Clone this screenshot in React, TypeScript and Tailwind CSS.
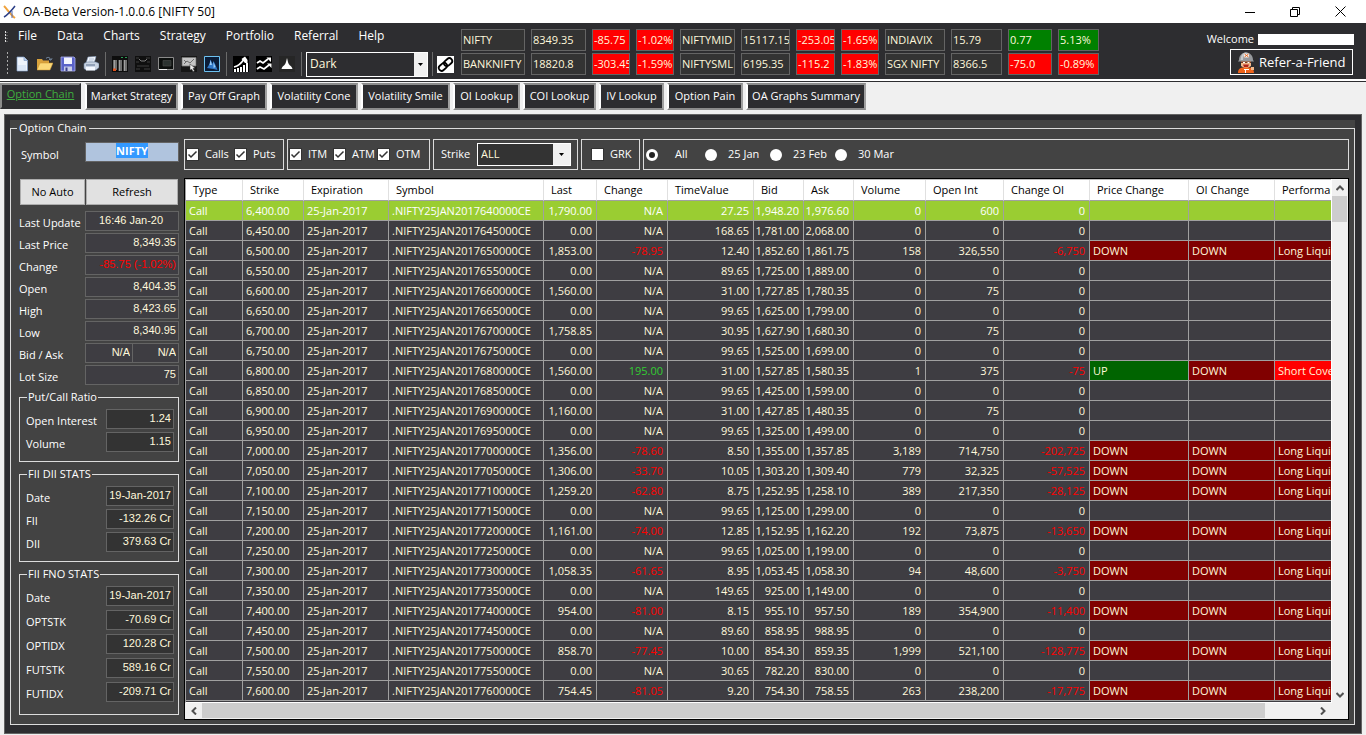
import { useEffect, useRef, type ReactNode } from 'react';

const menus = ['File', 'Data', 'Charts', 'Strategy', 'Portfolio', 'Referral', 'Help'];

const tabs = [
  { label: 'Market Strategy', width: 'w-[93px]' },
  { label: 'Pay Off Graph', width: 'w-[86px]' },
  { label: 'Volatility Cone', width: 'w-[88px]' },
  { label: 'Volatility Smile', width: 'w-[89px]' },
  { label: 'OI Lookup', width: 'w-[67px]' },
  { label: 'COI Lookup', width: 'w-[73px]' },
  { label: 'IV Lookup', width: 'w-[65px]' },
  { label: 'Option Pain', width: 'w-[76px]' },
  { label: 'OA Graphs Summary', width: 'w-[120px]' },
];

const quotes = [
  ['NIFTY', '8349.35', '-85.75', '-1.02%', 'NIFTYMID', '15117.15', '-253.05', '-1.65%', 'INDIAVIX', '15.79', '0.77', '5.13%'],
  ['BANKNIFTY', '18820.8', '-303.45', '-1.59%', 'NIFTYSML', '6195.35', '-115.2', '-1.83%', 'SGX NIFTY', '8366.5', '-75.0', '-0.89%'],
];

const columns = [
  { name: 'Type', width: 'w-[57px]' },
  { name: 'Strike', width: 'w-[61px]' },
  { name: 'Expiration', width: 'w-[85px]' },
  { name: 'Symbol', width: 'w-[155px]' },
  { name: 'Last', width: 'w-[53px]' },
  { name: 'Change', width: 'w-[71px]' },
  { name: 'TimeValue', width: 'w-[86px]' },
  { name: 'Bid', width: 'w-[50px]' },
  { name: 'Ask', width: 'w-[50px]' },
  { name: 'Volume', width: 'w-[72px]' },
  { name: 'Open Int', width: 'w-[78px]' },
  { name: 'Change OI', width: 'w-[86px]' },
  { name: 'Price Change', width: 'w-[99px]' },
  { name: 'OI Change', width: 'w-[86px]' },
  { name: 'Performance', width: 'w-[120px]' },
];

// strike, last, change, time value, bid, ask, volume, open interest, change in OI
const chain: string[][] = [
  ['6,400', '1,790.00', 'N/A', '27.25', '1,948.20', '1,976.60', '0', '600', '0'],
  ['6,450', '0.00', 'N/A', '168.65', '1,781.00', '2,068.00', '0', '0', '0'],
  ['6,500', '1,853.00', '-78.95', '12.40', '1,852.60', '1,861.75', '158', '326,550', '-6,750'],
  ['6,550', '0.00', 'N/A', '89.65', '1,725.00', '1,889.00', '0', '0', '0'],
  ['6,600', '1,560.00', 'N/A', '31.00', '1,727.85', '1,780.35', '0', '75', '0'],
  ['6,650', '0.00', 'N/A', '99.65', '1,625.00', '1,799.00', '0', '0', '0'],
  ['6,700', '1,758.85', 'N/A', '30.95', '1,627.90', '1,680.30', '0', '75', '0'],
  ['6,750', '0.00', 'N/A', '99.65', '1,525.00', '1,699.00', '0', '0', '0'],
  ['6,800', '1,560.00', '195.00', '31.00', '1,527.85', '1,580.35', '1', '375', '-75'],
  ['6,850', '0.00', 'N/A', '99.65', '1,425.00', '1,599.00', '0', '0', '0'],
  ['6,900', '1,160.00', 'N/A', '31.00', '1,427.85', '1,480.35', '0', '75', '0'],
  ['6,950', '0.00', 'N/A', '99.65', '1,325.00', '1,499.00', '0', '0', '0'],
  ['7,000', '1,356.00', '-78.60', '8.50', '1,355.00', '1,357.85', '3,189', '714,750', '-202,725'],
  ['7,050', '1,306.00', '-33.70', '10.05', '1,303.20', '1,309.40', '779', '32,325', '-57,525'],
  ['7,100', '1,259.20', '-62.80', '8.75', '1,252.95', '1,258.10', '389', '217,350', '-28,125'],
  ['7,150', '0.00', 'N/A', '99.65', '1,125.00', '1,299.00', '0', '0', '0'],
  ['7,200', '1,161.00', '-74.00', '12.85', '1,152.95', '1,162.20', '192', '73,875', '-13,650'],
  ['7,250', '0.00', 'N/A', '99.65', '1,025.00', '1,199.00', '0', '0', '0'],
  ['7,300', '1,058.35', '-61.65', '8.95', '1,053.45', '1,058.30', '94', '48,600', '-3,750'],
  ['7,350', '0.00', 'N/A', '149.65', '925.00', '1,149.00', '0', '0', '0'],
  ['7,400', '954.00', '-81.00', '8.15', '955.10', '957.50', '189', '354,900', '-11,400'],
  ['7,450', '0.00', 'N/A', '89.60', '858.95', '988.95', '0', '0', '0'],
  ['7,500', '858.70', '-77.45', '10.00', '854.30', '859.35', '1,999', '521,100', '-128,775'],
  ['7,550', '0.00', 'N/A', '30.65', '782.20', '830.00', '0', '0', '0'],
  ['7,600', '754.45', '-81.05', '9.20', '754.30', '758.55', '263', '238,200', '-17,775'],
];

function Icon({ children, size = 16 }: { children: ReactNode; size?: number }) {
  return (
    <svg width={size} height={size} viewBox="0 0 16 16" aria-hidden="true">
      {children}
    </svg>
  );
}

const fileTools: [string, ReactNode][] = [
  ['New', <>
    <path d="M3 1h7l3.500 3.500V15H3z" fill="#eef4fc" stroke="#7f9cc4" strokeWidth=".7" />
    <path d="M10 1v3.500h3.500" fill="#b9cdea" stroke="#7f9cc4" strokeWidth=".7" />
    <path d="M4 9h8v5H4z" fill="#dbe7f7" />
  </>],
  ['Open', <>
    <path d="M0 3h5l1 1.500h6V14H0z" fill="#d9a23c" />
    <path d="M3 7h13l-3 7H0z" fill="#fbd978" stroke="#c8912e" strokeWidth=".5" />
    <path d="M9 2.500c2-2 4-1 4.500 1M12 3l1.800 1.200L15 2.300" fill="none" stroke="#7d93ad" />
  </>],
  ['Save', <>
    <path d="M1 1h13l1 1v13H1z" fill="#5a62c8" stroke="#a9aeec" strokeWidth=".8" />
    <path d="M4 1.500h8V8H4z" fill="#f4f5ff" />
    <path d="M4 10.500h8V15H4z" fill="#c8cce8" />
    <path d="M5.500 11.500h2V15h-2z" fill="#3a3f8e" />
  </>],
  ['Print', <>
    <path d="M5 1l8-.5-2 7H3z" fill="#f6f9ff" stroke="#8aa0bd" strokeWidth=".6" />
    <path d="M6 3h5M5.500 5h5" stroke="#8aa0bd" strokeWidth=".7" />
    <path d="M1 7.500l3-1.500h9l3 1.500v4L13 14H3l-2-1.500z" fill="#c8d3e2" stroke="#6f83a0" strokeWidth=".6" />
    <path d="M3 11h9v3.500H3z" fill="#f4f8ff" />
    <path d="M3 9h9" stroke="#5b6f8d" />
  </>],
];

const chartTools: [string, ReactNode][] = [
  ['Bars', <>
    <path d="M0 0h16v16H0z" fill="#0d0d0d" />
    <path d="M1 4h4v10H1zM6.500 4h3.500v11H6.500zM11.500 4H15v11h-3.500z" fill="#6f6f6f" />
    <path d="M2 4h1v10H2zM7 4h1v11H7zM12 4h1v11h-1z" fill="#a0a0a0" />
    <path d="M1 12.500h3V15H1z" fill="#e0521c" />
    <path d="M9 1.500h2M13 1.500h2" stroke="#2d9a55" />
  </>],
  ['Curve', <>
    <path d="M0 0h16v16H0z" fill="#0f0f0f" />
    <path d="M1 2h3M11 2h4M1 6h3M12 6h3M2 10h12M1 13h4M9 13h6" stroke="#4a4a4a" strokeWidth=".8" />
    <path d="M4 3l2 2h4l2-2" fill="none" stroke="#888" strokeWidth=".9" />
  </>],
  ['Monitor', <>
    <path d="M.5 1.500h15v12H.5z" fill="#0c0f0e" stroke="#8a8a8a" />
    <path d="M5 4.500h8v5.500H5z" fill="#2b3230" stroke="#4c4c4c" strokeWidth=".6" />
    <path d="M1 13.500h8" stroke="#eee" />
  </>],
  ['Pointer', <>
    <path d="M0 0h16v16H0z" fill="#161616" />
    <path d="M1 1.500h14v8.500H1z" fill="#c4c4c4" stroke="#777" strokeWidth=".8" />
    <path d="M3 8l3-3 3 2 4-4M3 4l2 2" fill="none" stroke="#555" strokeWidth=".8" />
    <path d="M9 8l5 4-2 .5 1.500 2.500-1.500.8-1.200-2.500L9 14z" fill="#eee" stroke="#333" strokeWidth=".5" />
  </>],
  ['Surface', <>
    <path d="M.5.500h15v15H.5z" fill="#0b1d38" stroke="#6cc1f0" />
    <path d="M3 12l2.500-4 1-4.500L8.500 8l1-3 2 4 2 5-4-1z" fill="#2f78c8" />
    <path d="M5.500 9l1-5 1.500 5zM9.500 6l2 5-2 1z" fill="#9cccf4" />
  </>],
];

const analysisTools: [string, ReactNode][] = [
  ['Growth', <>
    <path d="M0 0h16v16H0z" fill="#000" />
    <path d="M2 16v-3M5 16v-4M8 16v-5M11 16v-7M14 16V7" stroke="#fff" strokeWidth="2" />
    <path d="M1 11c4-1 7-3 10-8" fill="none" stroke="#fff" strokeWidth="1.500" />
    <path d="M8.500 3L12 .5 14.500 4v3H12z" fill="#fff" />
  </>],
  ['Waves', <>
    <path d="M0 0h16v16H0z" fill="#000" />
    <path d="M1 7l3-2 3 2 5-4M1 13l3-2 4 2 5-4" fill="none" stroke="#fff" strokeWidth="1.700" />
    <path d="M10.500 1.500H15V6zM11 7.500h4.500V12z" fill="#fff" />
  </>],
  ['Distribution', <>
    <path d="M0 0h16v16H0z" fill="#262626" />
    <path d="M8 2c1 3 .8 6 3 7.500 1 .8 2 1.500 2.500 3.500h-11c.5-2 1.500-2.700 2.500-3.500C7.200 8 7 5 8 2z" fill="#fff" />
  </>],
];

function ToolGroup({ tools }: { tools: [string, ReactNode][] }) {
  return (
    <>
      {tools.map(([name, art]) => (
        <button key={name} aria-label={name} className="shrink-0">
          <Icon>{art}</Icon>
        </button>
      ))}
    </>
  );
}

function Separator({ className = '' }: { className?: string }) {
  return <div className={`h-6 w-px shrink-0 bg-[#6a6a6a] ${className}`} />;
}

function DropArrow() {
  return (
    <span className="grid w-[13px] place-items-center bg-[#f0f0f0]">
      <svg width="5" height="3" viewBox="0 0 5 3" aria-hidden="true">
        <path d="M0 0h5L2.500 3z" fill="#000" />
      </svg>
    </span>
  );
}

function quoteTone(value: string, column: number) {
  if (column % 4 < 2) return 'bg-[#333333]';
  return value.startsWith('-') ? 'bg-[#ff0000]' : 'bg-[#008000]';
}

function TitleBar() {
  return (
    <header className="flex h-[23px] items-center bg-white pr-5 pl-[3px] text-black">
      <svg width="14" height="14" viewBox="0 0 14 14" aria-hidden="true">
        <path d="M1 1c3 3 7 9 11 12" stroke="#f0a23c" strokeWidth="2" fill="none" />
        <path d="M12 1C9 5 6 9 1 12" stroke="#2c3f87" strokeWidth="1.500" fill="none" />
        <path d="M9 6v7" stroke="#4f68b4" strokeWidth="1" />
      </svg>
      <h1 className="ml-[6px] text-[12px]">OA-Beta Version-1.0.0.6 [NIFTY 50]</h1>
      <div className="ml-auto flex items-center gap-[35px]">
        <button aria-label="Minimize">
          <svg width="10" height="10" viewBox="0 0 10 10"><path d="M0 5.500h10" stroke="#000" /></svg>
        </button>
        <button aria-label="Restore">
          <svg width="10" height="10" viewBox="0 0 10 10"><path d="M.5 2.500h7v7h-7zM2.500 2V.5h7v7H8" fill="none" stroke="#000" /></svg>
        </button>
        <button aria-label="Close">
          <svg width="11" height="11" viewBox="0 0 11 11"><path d="M.5.500l10 10M10.500.500l-10 10" stroke="#000" /></svg>
        </button>
      </div>
    </header>
  );
}

function Toolbar() {
  return (
    <div className="flex h-14 items-start bg-[#2d2d30]">
      <div className="w-[461px] shrink-0">
        <nav className="flex h-[26px] items-center gap-5 text-[12px] text-white">
          <svg width="3" height="11" viewBox="0 0 3 11" className="-mr-[10px] ml-[5px]" aria-hidden="true">
            <path d="M.5 0v11" stroke="#ddd" strokeDasharray="2 1" />
            <path d="M2 1v10" stroke="#888" strokeDasharray="1 2" />
          </svg>
          {menus.map((m) => (
            <button key={m}>{m}</button>
          ))}
        </nav>
        <div className="flex h-[30px] items-center gap-[7px] pl-[7px]">
          <svg width="2" height="24" viewBox="0 0 2 24" className="-mr-[2px]" aria-hidden="true">
            <path d="M.5 0v24" stroke="#aaa" strokeDasharray="2 2" />
          </svg>
          <ToolGroup tools={fileTools} />
          <Separator className="-mx-px" />
          <ToolGroup tools={chartTools} />
          <Separator className="-mx-px" />
          <ToolGroup tools={analysisTools} />
          <div className="-ml-px flex items-center gap-1">
            <Separator />
            <label className="flex h-[25px] w-[122px] border border-white bg-[#2d2d30]">
              <select aria-label="Theme" className="min-w-0 flex-1 appearance-none bg-transparent pl-[3px] text-[12px] text-[#fff8dc]">
                <option>Dark</option>
              </select>
              <DropArrow />
            </label>
            <Separator />
            <button aria-label="Link" className="bg-white">
              <Icon size={17}>
                <g fill="none" stroke="#000" strokeWidth="1.700" transform="rotate(-42 8 8)">
                  <rect x=".5" y="5.300" width="8.500" height="5.400" rx="2.700" />
                  <rect x="7" y="5.300" width="8.500" height="5.400" rx="2.700" />
                </g>
              </Icon>
            </button>
          </div>
        </div>
      </div>

      <div className="mt-[6px] grid grid-cols-[64px_55px_38px_38px_55px_49px_39px_38px_60px_51px_44px_41px] gap-x-[6px] gap-y-[2px]">
        {quotes.map((row) =>
          row.map((value, i) => (
            <input
              key={row[0] + i}
              readOnly
              aria-label={row[i - (i % 4)] + ' quote ' + (i % 4)}
              value={value}
              className={`h-[22px] w-full min-w-0 border border-[#646464] pb-[2px] pl-[1px] text-[11px] text-[#fff8dc] ${quoteTone(value, i)}`}
            />
          )),
        )}
      </div>

      <div className="ml-auto flex flex-col items-end pt-[7px] pr-3 text-white">
        <div className="flex h-[18px] items-center gap-1 text-[11px]">
          Welcome <span className="h-[11px] w-24 bg-white" />
        </div>
        <button className="mt-px mr-px flex h-[26px] w-[123px] items-center gap-1 border border-white pl-[6px] text-[13px]">
          <svg width="18" height="22" viewBox="0 0 18 22" className="shrink-0" aria-hidden="true">
            <path d="M4 9h10v6l-5 3-5-3z" fill="#f2b98c" />
            <path d="M2 9c0-10 14-10 14 0l1 1.500H1z" fill="#96999d" />
            <path d="M4 6c1-4 4-5 6-4.500C7 3 6 6 6 9H3.500z" fill="#c6c9cc" />
            <path d="M7 2.500h5v4H7z" fill="#f0f0f0" />
            <path d="M7.500 3l4 3M11.500 3l-4 3" stroke="#e8641c" />
            <path d="M4 10.500h10v1.500H4z" fill="#7a3a1e" />
            <path d="M6 11.500h2M10.500 11.500h2" stroke="#fff" />
            <path d="M6 13.500h6l-1 2.500H7z" fill="#b2251b" />
            <path d="M1 22c0-5 3-6 8-5.500 5-.5 8 .5 8 5.500z" fill="#f0641a" />
            <path d="M14 16h3v3h-3z" fill="#f2b98c" />
            <path d="M7 18.500h5M8.500 18v4" stroke="#fff" />
          </svg>
          <span className="pt-[2px]">Refer-a-Friend</span>
        </button>
      </div>
    </div>
  );
}

function TabStrip() {
  return (
    <nav className="mt-[2px] flex h-[33px] items-start gap-[3px] border-t border-[#2d2d30] bg-[#f0f0f0] pt-px text-[11px] text-white">
      <button className="mr-px h-[26px] w-[81px] border-2 border-t-[#8c8c8c] border-r-[#2d2d30] border-b-[#2d2d30] border-l-[#8c8c8c] bg-[#2d2d30] pb-1 whitespace-nowrap text-[#3fae3f] underline">
        Option Chain
      </button>
      {tabs.map((tab) => (
        <button
          key={tab.label}
          className={`h-[27px] shrink-0 border-2 border-t-[#8c8c8c] border-r-[#a0a0a0] border-b-[#8c8c8c] border-l-white bg-[#2d2d30] whitespace-nowrap ${tab.width}`}
        >
          {tab.label}
        </button>
      ))}
    </nav>
  );
}

function Field({ label, value, tone = 'plain' }: { label: string; value: string; tone?: 'plain' | 'center' | 'loss' | 'stat' }) {
  const look = {
    plain: 'w-[94px] bg-[#3e3d42] text-right text-[#fff8dc]',
    center: 'w-[94px] bg-[#3e3d42] text-center text-[#fff8dc]',
    loss: 'w-[94px] bg-[#3e3d42] text-right text-[#ff0000]',
    stat: 'w-[68px] bg-[#333333] text-right text-[#fff8dc]',
  }[tone];
  return (
    <label className="flex h-5 items-center justify-between text-[11px] leading-4 whitespace-nowrap text-white">
      <span className="pt-1">{label}</span>
      <input
        readOnly
        value={value}
        className={`h-5 border border-[#646464] pr-[2px] pb-[3px] font-['Liberation_Sans',Arial,sans-serif] text-[11px] ${look}`}
      />
    </label>
  );
}

function StatGroup({ title, rows, spacing }: { title: string; rows: [string, string][]; spacing: string }) {
  return (
    <fieldset className={`mt-1 min-w-0 border border-[#dcdcdc] pr-1 pl-[6px] ${spacing}`}>
      <legend className="ml-[1px] h-4 px-[1px] text-[11px] leading-4 text-white">{title}</legend>
      <div className="flex flex-col gap-[inherit] pt-1">
        {rows.map(([label, value]) => (
          <Field key={label} label={label} value={value} tone="stat" />
        ))}
      </div>
    </fieldset>
  );
}

function Sidebar() {
  const symbol = useRef<HTMLInputElement>(null);
  useEffect(() => {
    symbol.current?.focus();
    symbol.current?.select();
  }, []);

  return (
    <aside className="w-[173px] shrink-0 pt-[6px] pr-[5px] pl-2">
      <label className="flex h-5 items-center justify-between text-[11px] leading-4 text-white">
        <span className="pt-[6px] pl-[2px]">Symbol</span>
        <input
          ref={symbol}
          defaultValue="NIFTY"
          className="h-5 w-[94px] border border-[#646464] bg-[#b0c4de] pb-[3px] text-center text-[11px] font-bold text-white caret-transparent outline-none selection:bg-[#3399ff] selection:text-white"
        />
      </label>
      <div className="mt-[17px] flex gap-px pr-px pl-px text-[11px] text-black">
        <button className="h-[26px] w-[65px] border border-[#adadad] bg-[#e1e1e1]">No Auto</button>
        <button className="h-[26px] flex-1 border border-[#adadad] bg-[#e1e1e1]">Refresh</button>
      </div>
      <div className="mt-[6px] flex flex-col gap-[2px]">
        <Field label="Last Update" value="16:46 Jan-20" tone="center" />
        <Field label="Last Price" value="8,349.35" />
        <Field label="Change" value="-85.75 (-1.02%)" tone="loss" />
        <Field label="Open" value="8,404.35" />
        <Field label="High" value="8,423.65" />
        <Field label="Low" value="8,340.95" />
        <div className="flex h-5 items-center justify-between text-[11px] leading-4 text-white">
          <span className="pt-1">Bid / Ask</span>
          <div className="flex w-[94px] font-['Liberation_Sans',Arial,sans-serif] text-[#fff8dc]">
            <input readOnly aria-label="Bid" value="N/A" className="h-5 w-12 border border-[#646464] bg-[#3e3d42] pr-[2px] pb-[3px] text-right" />
            <input readOnly aria-label="Ask" value="N/A" className="h-5 w-[46px] border border-l-0 border-[#646464] bg-[#3e3d42] pr-[2px] pb-[3px] text-right" />
          </div>
        </div>
        <Field label="Lot Size" value="75" />
      </div>
      <StatGroup title="Put/Call Ratio" spacing="gap-[3px] pb-[9px]" rows={[['Open Interest', '1.24'], ['Volume', '1.15']]} />
      <StatGroup
        title="FII DII STATS"
        spacing="gap-[3px] pb-[9px]"
        rows={[['Date', '19-Jan-2017'], ['FII', '-132.26 Cr'], ['DII', '379.63 Cr']]}
      />
      <StatGroup
        title="FII FNO STATS"
        spacing="gap-1 pb-3"
        rows={[
          ['Date', '19-Jan-2017'],
          ['OPTSTK', '-70.69 Cr'],
          ['OPTIDX', '120.28 Cr'],
          ['FUTSTK', '589.16 Cr'],
          ['FUTIDX', '-209.71 Cr'],
        ]}
      />
    </aside>
  );
}

function Check({ label, width, checked = true }: { label: string; width: string; checked?: boolean }) {
  return (
    <label className={`flex items-center gap-[6px] ${width}`}>
      <span className="grid shrink-0">
        <input
          type="checkbox"
          defaultChecked={checked}
          className="peer col-start-1 row-start-1 size-[13px] appearance-none border border-[#333333] bg-white"
        />
        <svg viewBox="0 0 13 13" className="pointer-events-none col-start-1 row-start-1 hidden size-[13px] peer-checked:block" aria-hidden="true">
          <path d="M2.500 6.500L5 9l5.500-5.500" fill="none" stroke="#333" strokeWidth="1.500" />
        </svg>
      </span>
      {label}
    </label>
  );
}

function Expiry({ label, look, checked = false }: { label: string; look: string; checked?: boolean }) {
  return (
    <label className={`flex items-center ${look}`}>
      <input
        type="radio"
        name="expiry"
        defaultChecked={checked}
        className="size-3 appearance-none rounded-full bg-white checked:border-[3px] checked:border-white checked:bg-[#222]"
      />
      {label}
    </label>
  );
}

function Filters() {
  const box = 'flex h-[31px] shrink-0 items-center border border-[#dcdcdc]';
  return (
    <div className="flex gap-[3px] text-[11px] whitespace-nowrap text-white">
      <div className={`${box} w-[100px] pl-[1px]`}>
        <Check label="Calls" width="w-12" />
        <Check label="Puts" width="w-12" />
      </div>
      <div className={`${box} w-[143px] pl-[1px]`}>
        <Check label="ITM" width="w-11" />
        <Check label="ATM" width="w-11" />
        <Check label="OTM" width="w-11" />
      </div>
      <div className={`${box} w-[145px] justify-between pr-[6px] pl-[7px]`}>
        <label htmlFor="strike">Strike</label>
        <div className="flex h-[23px] w-[94px] border border-white bg-[#333333]">
          <select id="strike" className="min-w-0 flex-1 appearance-none bg-transparent pl-[3px] text-[#fff8dc]">
            <option>ALL</option>
          </select>
          <span className="flex w-[17px] *:w-full"><DropArrow /></span>
        </div>
      </div>
      <div className={`${box} w-[59px] pl-[9px]`}>
        <Check label="GRK" width="w-12" checked={false} />
      </div>
      <div className="flex h-[31px] min-w-0 flex-1 items-center border border-[#dcdcdc] pl-[2px]">
        <Expiry label="All" look="w-[59px] gap-[17px]" checked />
        <Expiry label="25 Jan" look="w-[65px] gap-[11px]" />
        <Expiry label="23 Feb" look="w-[65px] gap-[11px]" />
        <Expiry label="30 Mar" look="w-[65px] gap-[11px]" />
      </div>
    </div>
  );
}

function textTone(value: string, selected: boolean) {
  if (value.startsWith('-')) return 'text-[#ff0000]';
  if (value === '195.00') return 'text-[#32cd32]';
  return selected ? 'text-white' : 'text-[#fff8dc]';
}

function ChainRow({ row, selected }: { row: string[]; selected: boolean }) {
  const [strike, ...figures] = row;
  const change = row[2];
  const moved = change !== 'N/A';
  const rising = moved && !change.startsWith('-');
  const cell = 'overflow-hidden border-r border-b border-[#a0a0a0] pl-[3px] text-clip';
  const ink = selected ? 'text-white' : 'text-[#fff8dc]';
  const down = moved ? 'bg-[#800000]' : '';
  return (
    <tr className={selected ? 'h-5 bg-[#9acd32]' : 'h-5 bg-[#3e3d42]'}>
      <td className={`${cell} ${ink}`}>Call</td>
      <td className={`${cell} ${ink}`}>{strike}.00</td>
      <td className={`${cell} ${ink}`}>25-Jan-2017</td>
      <td className={`${cell} ${ink}`}>.NIFTY25JAN2017{strike.replace(',', '')}00CE</td>
      {figures.map((value, i) => (
        <td key={i} className={`border-r border-b border-[#a0a0a0] pr-1 text-right ${textTone(value, selected)}`}>
          {value}
        </td>
      ))}
      <td className={`${cell} ${ink} ${rising ? 'bg-[#006400]' : down}`}>{moved && (rising ? 'UP' : 'DOWN')}</td>
      <td className={`${cell} ${ink} ${down}`}>{moved && 'DOWN'}</td>
      <td className={`${cell} ${ink} ${rising ? 'bg-[#ff0000]' : down}`}>
        {moved && (rising ? 'Short Covering' : 'Long Liquidation')}
      </td>
    </tr>
  );
}

function ScrollButton({ name, path, className }: { name: string; path: string; className: string }) {
  return (
    <button aria-label={name} className={`grid shrink-0 place-items-center ${className}`}>
      <svg width="8" height="8" viewBox="0 0 8 8" aria-hidden="true">
        <path d={path} fill="none" stroke="#505050" strokeWidth="2" />
      </svg>
    </button>
  );
}

function ChainTable() {
  return (
    <div className="mt-2 flex flex-col border border-black bg-[#f0f0f0]">
      <div className="flex">
        <div className="min-w-0 flex-1 overflow-hidden border-t border-b border-l border-t-[#c0c0c0] border-b-white border-l-[#a0a0a0] bg-[#3e3d42] pb-px">
          <table className="w-[1209px] table-fixed border-separate border-spacing-0 text-[11px] leading-4 whitespace-nowrap">
            <thead>
              <tr className="h-[21px] bg-white text-black">
                {columns.map((c) => (
                  <th key={c.name} className={`border-r border-b border-r-[#e0e0e0] border-b-[#a0a0a0] pl-[7px] text-left font-normal ${c.width}`}>
                    {c.name}
                  </th>
                ))}
              </tr>
            </thead>
            <tbody>
              {chain.map((row, i) => (
                <ChainRow key={row[0]} row={row} selected={i === 0} />
              ))}
            </tbody>
          </table>
        </div>
        <div className="flex w-[17px] shrink-0 flex-col border-l border-white bg-[#f0f0f0]">
          <ScrollButton name="Scroll up" path="M.5 6L4 2.500 7.500 6" className="h-[17px]" />
          <div className="h-[26px] w-[15px] bg-[#cdcdcd]" />
          <ScrollButton name="Scroll down" path="M.5 2L4 5.500 7.500 2" className="mt-auto h-[17px]" />
        </div>
      </div>
      <div className="flex h-4 pr-[17px]">
        <ScrollButton name="Scroll left" path="M6 .5L2.500 4 6 7.500" className="w-[17px]" />
        <div className="min-w-0 flex-1">
          <div className="h-[15px] w-[95.6%] bg-[#cdcdcd]" />
        </div>
        <ScrollButton name="Scroll right" path="M2 .5L5.500 4 2 7.500" className="w-[17px]" />
      </div>
    </div>
  );
}

export default function App() {
  return (
    <div className="min-h-screen bg-[#f0f0f0] font-['Open_Sans','Segoe_UI',sans-serif]">
      <div className="bg-white">
        <TitleBar />
        <Toolbar />
        <TabStrip />
      </div>
      <main className="mx-1 border border-[#646464] bg-[#2d2d30] pt-[5px] pr-[6px] pb-2 pl-[5px]">
        <div className="bg-[#434343]">
          <fieldset className="min-w-0 border border-[#dcdcdc] pr-[5px] pb-1">
            <legend className="ml-[6px] h-4 px-[2px] text-[11px] leading-4 text-white">Option Chain</legend>
            <div className="flex">
              <Sidebar />
              <section className="min-w-0 flex-1 pt-[3px]">
                <Filters />
                <ChainTable />
              </section>
            </div>
          </fieldset>
        </div>
      </main>
    </div>
  );
}
